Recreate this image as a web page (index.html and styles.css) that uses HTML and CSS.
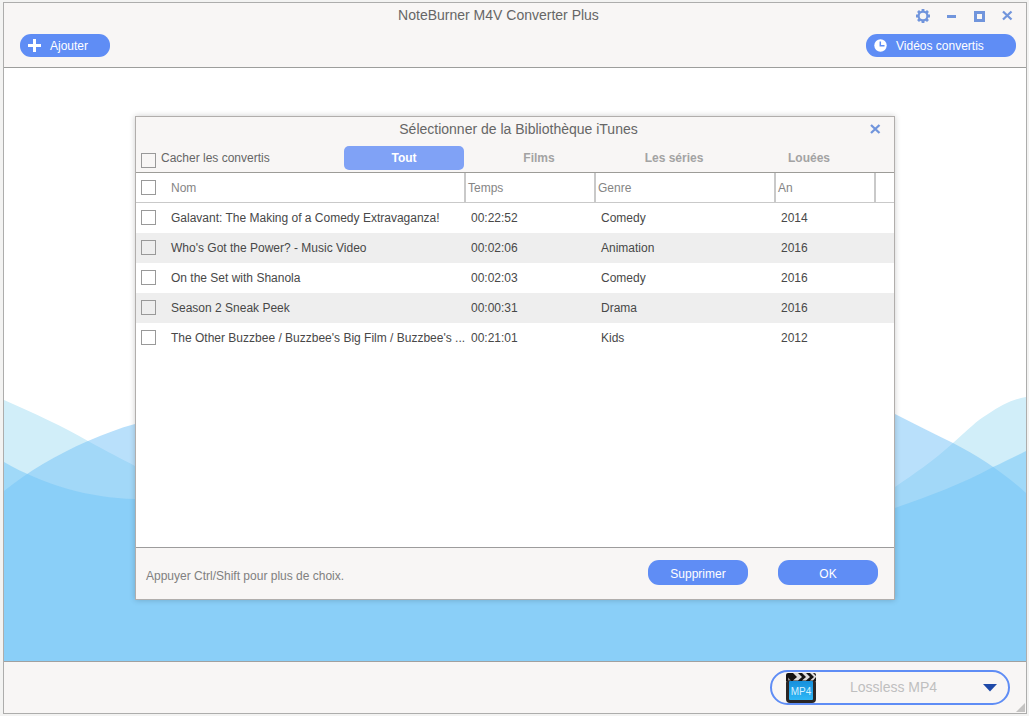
FILE: index.html
```html
<!DOCTYPE html>
<html lang="fr">
<head>
<meta charset="utf-8">
<title>NoteBurner M4V Converter Plus</title>
<link rel="stylesheet" href="styles.css">
</head>
<body>
<div class="window">
  <header class="app-header">
    <div class="title-bar">
      <h1 class="app-title">NoteBurner M4V Converter Plus</h1>
      <div class="window-controls">
        <button class="icon-button" type="button" aria-label="Paramètres">
          <svg width="16" height="16" viewBox="0 0 16 16" fill="none" stroke="#7195dc">
            <circle cx="8" cy="8" r="4.400" stroke-width="2.200"/>
            <path stroke-width="2.800" d="M8 1v2.500M8 12.500v2.500M1 8h2.500M12.500 8H15M3 3l1.600 1.600M11.400 11.400l1.600 1.600M3 13l1.600-1.600M11.400 4.600L13 3"/>
          </svg>
        </button>
        <button class="icon-button" type="button" aria-label="Réduire">
          <svg width="16" height="16" viewBox="0 0 16 16"><path fill="#7195dc" d="M4 7h9v3H4z"/></svg>
        </button>
        <button class="icon-button" type="button" aria-label="Agrandir">
          <svg width="16" height="16" viewBox="0 0 16 16"><path fill="#7195dc" fill-rule="evenodd" d="M3 3h11v11H3zM6 6v5h5V6z"/></svg>
        </button>
        <button class="icon-button" type="button" aria-label="Fermer">
          <svg width="16" height="16" viewBox="0 0 16 16"><path fill="none" stroke="#7195dc" stroke-width="2.300" d="M4 3.500l8.500 8M12.500 3.500L4 11.500"/></svg>
        </button>
      </div>
    </div>
    <div class="toolbar">
      <button class="pill pill-add" type="button">
        <svg width="13" height="13" viewBox="0 0 13 13"><path fill="#fff" d="M5 0h3v5h5v3H8v5H5V8H0V5h5z"/></svg>
        <span>Ajouter</span>
      </button>
      <button class="pill pill-history" type="button">
        <svg width="13" height="13" viewBox="0 0 13 13"><circle cx="6.500" cy="6.500" r="6.200" fill="#fff"/><path fill="none" stroke="#5f8df5" stroke-width="1.500" d="M6.300 2.500v4.300h4.200"/></svg>
        <span>Vidéos convertis</span>
      </button>
    </div>
  </header>

  <main class="stage">
    <svg class="waves" viewBox="0 0 1022 593" preserveAspectRatio="none" aria-hidden="true">
      <path class="wave-back" d="M0 332C30 345 60 359 84 373C104 384 118 391 131 398C350 510 700 560 891 419C910 406 929 393 949 375C965 361 972 353 984 346C997 337 1010 331 1022 329V593H0z"/>
      <path class="wave-mid" d="M0 423C25 403 52 387 84 373C100 366 116 360 131 356C400 270 650 300 891 346C910 356 929 365 949 375C976 389 1000 405 1022 425V593H0z"/>
      <path class="wave-front" d="M0 394C40 417 85 430 131 431C400 440 650 530 891 440C925 428 958 416 989 399C1000 394 1012 388 1022 383V593H0z"/>
    </svg>

    <section class="dialog" role="dialog" aria-labelledby="dialog-title">
      <header class="dialog-header">
        <div class="dialog-title-bar">
          <h2 class="dialog-title" id="dialog-title">Sélectionner de la Bibliothèque iTunes</h2>
          <button class="icon-button" type="button" aria-label="Fermer la boîte">
            <svg width="16" height="16" viewBox="0 0 16 16"><path fill="none" stroke="#7195dc" stroke-width="2.300" d="M4 4l8.500 8M12.500 4L4 12"/></svg>
          </button>
        </div>
        <div class="filters">
          <label class="hide-converted"><input class="check" type="checkbox"><span>Cacher les convertis</span></label>
          <div class="tabs" role="tablist">
            <button class="tab tab-active" type="button" role="tab" aria-selected="true">Tout</button>
            <button class="tab" type="button" role="tab" aria-selected="false">Films</button>
            <button class="tab" type="button" role="tab" aria-selected="false">Les séries</button>
            <button class="tab" type="button" role="tab" aria-selected="false">Louées</button>
          </div>
        </div>
      </header>

      <div class="dialog-body">
        <table class="library">
          <colgroup><col class="col-check"><col><col class="col-time"><col class="col-genre"><col class="col-year"><col class="col-end"></colgroup>
          <thead>
            <tr><th><input class="check" type="checkbox" aria-label="Tout sélectionner"></th><th class="divided name">Nom</th><th class="divided">Temps</th><th class="divided">Genre</th><th class="divided">An</th><th></th></tr>
          </thead>
          <tbody>
            <tr><td><input class="check" type="checkbox" aria-label="Galavant"></td><td class="name">Galavant: The Making of a Comedy Extravaganza!</td><td>00:22:52</td><td>Comedy</td><td>2014</td><td></td></tr>
            <tr><td><input class="check" type="checkbox" aria-label="Who's Got the Power?"></td><td class="name">Who's Got the Power? - Music Video</td><td>00:02:06</td><td>Animation</td><td>2016</td><td></td></tr>
            <tr><td><input class="check" type="checkbox" aria-label="On the Set with Shanola"></td><td class="name">On the Set with Shanola</td><td>00:02:03</td><td>Comedy</td><td>2016</td><td></td></tr>
            <tr><td><input class="check" type="checkbox" aria-label="Season 2 Sneak Peek"></td><td class="name">Season 2 Sneak Peek</td><td>00:00:31</td><td>Drama</td><td>2016</td><td></td></tr>
            <tr><td><input class="check" type="checkbox" aria-label="The Other Buzzbee"></td><td class="name">The Other Buzzbee / Buzzbee's Big Film / Buzzbee's ...</td><td>00:21:01</td><td>Kids</td><td>2012</td><td></td></tr>
          </tbody>
        </table>
      </div>

      <footer class="dialog-footer">
        <p class="hint">Appuyer Ctrl/Shift pour plus de choix.</p>
        <button class="action" type="button">Supprimer</button>
        <button class="action" type="button">OK</button>
      </footer>
    </section>
  </main>

  <footer class="app-footer">
    <div class="format-picker">
      <svg width="32" height="32" viewBox="0 0 32 32" aria-hidden="true">
        <defs><linearGradient id="screen" x1="0" y1="0" x2="0" y2="1"><stop offset="0" stop-color="#168fdc"/><stop offset="1" stop-color="#2fb8f6"/></linearGradient></defs>
        <rect x="1" y="7" width="30" height="24" rx="4" fill="#2b2625"/>
        <path fill="#151313" d="M1 3Q1 1 3 1h26q2 0 2 2v6H1z"/>
        <path fill="#dedcdc" d="M8 1h5l4 4-4 3.500H8L12 5zM17 1h4l4 4-4 3.500h-4L21 5zM25 1h3l3 3v1l-3 3.500h-3L29 5z"/>
        <path fill="#8b8888" d="M3 5.500l3 3H3z"/>
        <rect x="4" y="9" width="24" height="19" rx="1" fill="url(#screen)"/>
        <text class="icon-label" x="16" y="23" text-anchor="middle">MP4</text>
      </svg>
      <select class="format" aria-label="Format de sortie"><option>Lossless MP4</option></select>
      <svg class="arrow" width="14" height="8" viewBox="0 0 14 8" aria-hidden="true"><path fill="#1e49a8" d="M0 0h14L7 7.500z"/></svg>
    </div>
    <svg class="grip" width="9" height="9" viewBox="0 0 9 9" aria-hidden="true"><path fill="#c4c3c2" d="M9 0v9H0z"/></svg>
  </footer>
</div>
</body>
</html>
```
FILE: styles.css
```css
* { box-sizing: border-box; }

body {
  margin: 0;
  min-height: 100vh;
  padding: 2px 2px 2px 3px;
  display: flex;
  background: #f3f3f2;
  color: #666;
  font: 12px/16px "Liberation Sans", Arial, sans-serif;
}

button, select { font: inherit; }
button { border: 0; padding: 0; cursor: pointer; }
h1, h2, p { margin: 0; font-weight: normal; }
svg { display: block; flex: none; }

.window {
  flex: 1;
  display: flex;
  flex-direction: column;
  border: 1px solid #adadac;
  background: #f8f6f5;
}

/* Title bar and toolbar */
.app-header { border-bottom: 1px solid #9d9e9c; }
.title-bar {
  display: grid;
  grid-template-columns: 112px 1fr 112px;
  align-items: center;
  height: 25px;
  padding: 0 11px 0 10px;
}
.app-title {
  grid-column: 2;
  padding: 0 32px 2px 0;
  font-size: 14px;
  text-align: center;
}
.window-controls {
  display: flex;
  justify-content: flex-end;
  gap: 12px;
}
.icon-button { background: none; }
.toolbar {
  display: flex;
  justify-content: space-between;
  padding: 6px 10px 10px 16px;
}
.pill {
  display: flex;
  align-items: center;
  height: 23px;
  padding: 0 8px;
  border-radius: 11px;
  background: #5f8df5;
  color: #fff;
}
.pill-add { width: 90px; gap: 9px; }
.pill-history { width: 150px; gap: 9px; }

/* Work area */
.stage {
  flex: 1;
  display: flex;
  position: relative;
  padding: 48px 131px 61px;
  background: #fff;
}
.waves {
  position: absolute;
  inset: 0;
  width: 100%;
  height: 100%;
}
.wave-back { fill: #d1eef9; }
.wave-mid { fill: rgba(115, 193, 247, 0.5); }
.wave-front { fill: rgba(117, 198, 248, 0.53); }

/* Library dialog */
.dialog {
  position: relative;
  flex: 1;
  display: flex;
  flex-direction: column;
  border: 1px solid #b1aeac;
  background: #f8f6f5;
  box-shadow: 0 0 6px rgba(0, 0, 0, 0.2);
}
.dialog-header { border-bottom: 1px solid #9d9c98; }
.dialog-title-bar {
  display: grid;
  grid-template-columns: 34px 1fr 27px;
  align-items: center;
  height: 24px;
}
.dialog-title {
  grid-column: 2;
  font-size: 14px;
  text-align: center;
}
.filters {
  display: flex;
  justify-content: space-between;
  padding: 5px 25px 2px 5px;
}
.hide-converted {
  display: flex;
  align-items: center;
  gap: 5px;
}
.hide-converted .check { margin-top: 4px; }
.check {
  appearance: none;
  display: block;
  flex: none;
  width: 15px;
  height: 15px;
  margin: 0;
  border: 1px solid #999;
}
.check:checked { background: #5f8df5; }
.tabs { display: flex; gap: 15px; }
.tab {
  width: 120px;
  height: 24px;
  border-radius: 5px;
  background: none;
  color: #a3a3a3;
  font-weight: bold;
}
.tab-active { background: #80a2f6; color: #fff; }

.dialog-body { flex: 1; background: #fff; }
.library {
  width: 100%;
  table-layout: fixed;
  border-collapse: separate;
  border-spacing: 0;
}
.col-check { width: 30px; }
.col-time { width: 130px; }
.col-genre { width: 180px; }
.col-year { width: 100px; }
.col-end { width: 18px; }
.library th, .library td {
  height: 30px;
  padding: 0 0 0 5px;
  text-align: left;
  white-space: nowrap;
}
.library th {
  border-bottom: 1px solid #c9c9c9;
  color: #858585;
  font-weight: normal;
}
.library th.divided {
  padding-left: 2px;
  border-right: 2px solid #c9c9c9;
}
.library .name, .library th.name { padding-left: 5px; }
.library td { color: #484848; }
.library tbody .check { margin-bottom: 2px; }
.library tbody tr:nth-child(even) { background: #eee; }

.dialog-footer {
  display: flex;
  gap: 30px;
  padding: 12px 16px 14px 10px;
  border-top: 1px solid #9d9c9c;
}
.hint { flex: 1; padding-top: 8px; color: #808080; }
.action {
  width: 100px;
  height: 25px;
  padding-top: 2px;
  border-radius: 11px;
  background: #5f8df5;
  color: #fff;
}

/* Output format bar */
.app-footer {
  position: relative;
  display: flex;
  justify-content: flex-end;
  padding: 8px 16px;
  border-top: 1px solid #a1a1a0;
}
.format-picker {
  display: flex;
  align-items: center;
  width: 240px;
  height: 35px;
  padding: 0 11px 0 13px;
  border: 2px solid #5f8df5;
  border-radius: 18px;
}
.icon-label { fill: #d5f1ff; font-size: 10px; }
.format {
  appearance: none;
  flex: 1;
  margin-right: -14px;
  padding: 0 14px 2px 33px;
  border: 0;
  background: none;
  color: #bfbfbf;
  font-size: 14px;
}
.arrow { pointer-events: none; }
.grip {
  position: absolute;
  right: 1px;
  bottom: 1px;
}
```
